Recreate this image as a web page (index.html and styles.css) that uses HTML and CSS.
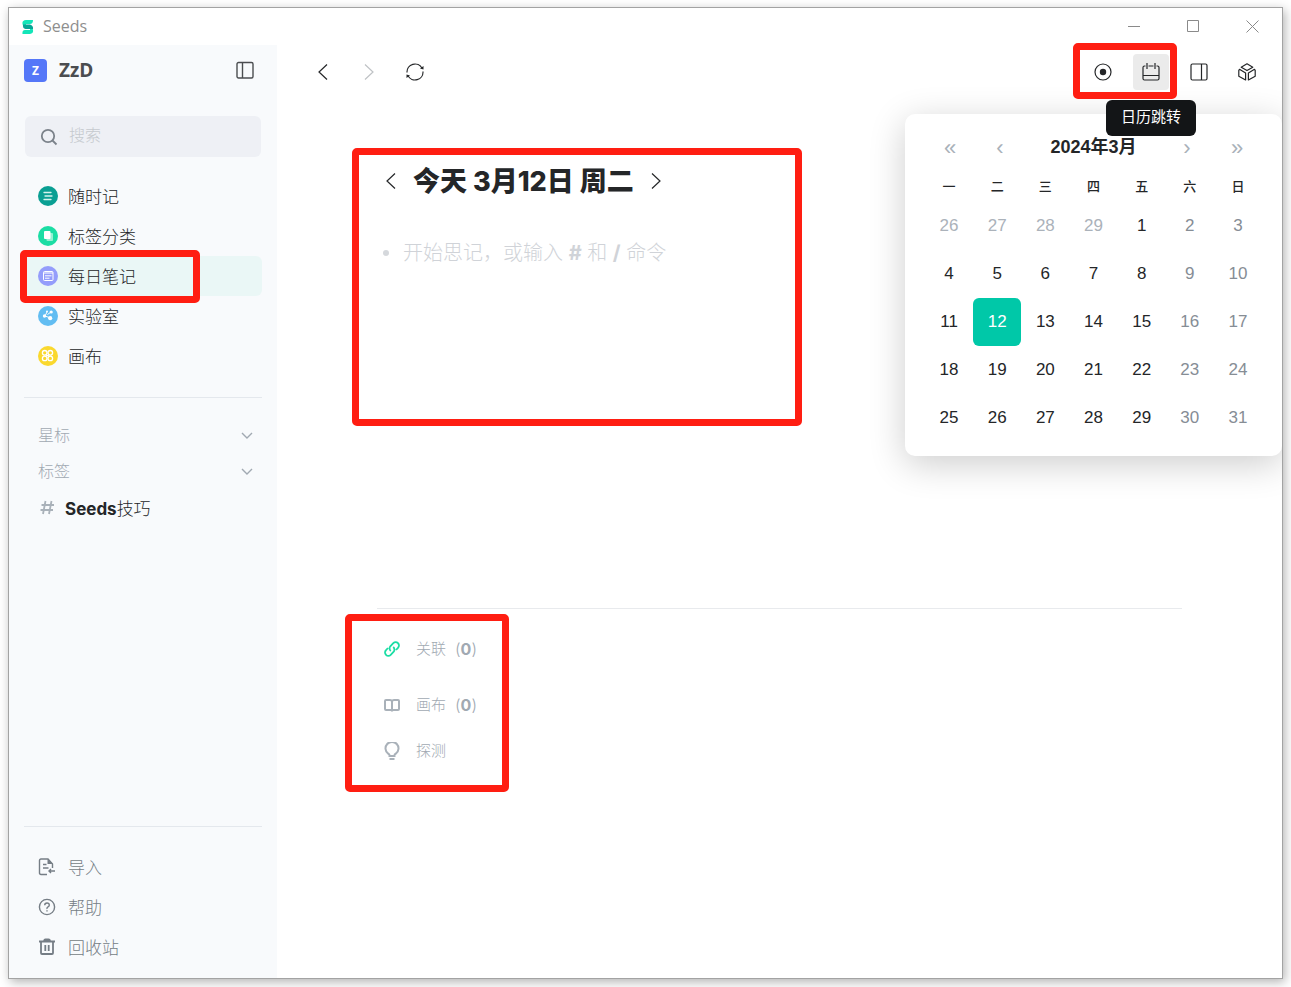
FILE: index.html
```html
<!DOCTYPE html>
<html lang="zh-CN">
  <head>
    <meta charset="UTF-8" />
    <meta name="viewport" content="width=device-width, initial-scale=1.0" />
    <title>Seeds</title>
    <!-- Stylesheet -->
    <link rel="stylesheet" href="styles.css">
  </head>
  <body>
    <div class="window">
      <header class="titlebar">
        <svg class="logo" width="12" height="14" viewBox="0 0 12 14">
          <path d="M4 0H11Q11 4 8 4H4V6L1 5.500Q-1 0.500 4 0Z" fill="#13e5b8" />
          <path d="M8 14H0.500Q0 10 3 10H8V8L10.500 8.500Q12.500 13 8 14Z" fill="#13e5b8" />
          <path d="M1 4.500H8Q11.500 5.500 11 9H3.500Q0.500 8.500 1 4.500Z" fill="#07a595" />
        </svg>
        <span class="app-name">Seeds</span>
        <div class="window-controls">
          <button aria-label="最小化">
            <svg width="13" height="13" viewBox="0 0 13 13"><path d="M0 6.500H12" /></svg>
          </button>
          <button aria-label="最大化">
            <svg width="13" height="13" viewBox="0 0 13 13"><path d="M.5.5H11.500V11.500H.5Z" /></svg>
          </button>
          <button aria-label="关闭">
            <svg width="13" height="13" viewBox="0 0 13 13"><path d="M.5.5L12.500 12.500M12.500.5L.5 12.500" /></svg>
          </button>
        </div>
      </header>

      <!-- Sidebar -->
      <aside class="sidebar">
        <div class="account">
          <span class="avatar">Z</span>
          <span class="user-name">ZzD</span>
          <button class="collapse" aria-label="收起侧栏">
            <svg class="line" width="18" height="18" viewBox="0 0 18 18">
              <rect x="1" y="1.500" width="16" height="15.500" rx="1.500" />
              <path d="M6.500 1.500V17" />
            </svg>
          </button>
        </div>
        <label class="search">
          <svg class="line" width="18" height="18" viewBox="0 0 18 18">
            <circle cx="8" cy="8" r="6.200" />
            <path d="M12.500 12.500L16.500 16.500" />
          </svg>
          <input type="text" placeholder="搜索" aria-label="搜索" />
        </label>
        <nav class="menu">
          <a href="#">
            <svg width="20" height="20" viewBox="0 0 20 20">
              <circle cx="10" cy="10" r="10" fill="#0a9f93" />
              <path d="M6 6.500H13M7 10H14M6 13.500H13" stroke="#d5f3ee" stroke-width="1.300" stroke-linecap="round" />
            </svg>
            随时记
          </a>
          <a href="#">
            <svg width="20" height="20" viewBox="0 0 20 20">
              <circle cx="10" cy="10" r="10" fill="#1bdda4" />
              <rect x="8.500" y="7" width="6.500" height="8" rx="1" fill="#96f0d3" />
              <rect x="6" y="5" width="6.500" height="8" rx="1" fill="#fff" />
            </svg>
            标签分类
          </a>
          <a href="#" class="active">
            <svg width="20" height="20" viewBox="0 0 20 20" fill="none">
              <circle cx="10" cy="10" r="10" fill="#949dfb" />
              <rect x="5.500" y="5.500" width="9.500" height="9" rx="1" stroke="#fff" />
              <path d="M5.500 7H15" stroke="#fff" />
              <path d="M7 9.800H13.500M7 12.200H11.500" stroke="#fff" />
            </svg>
            每日笔记
            <span class="mark mark-menu" aria-hidden="true"></span>
          </a>
          <a href="#">
            <svg width="20" height="20" viewBox="0 0 20 20">
              <circle cx="10" cy="10" r="10" fill="#62bdf2" />
              <path d="M7 10L9 6M7 10L12.500 12M9.500 8.500L13 6" stroke="#fff" />
              <circle cx="6.500" cy="10" r="1.700" fill="#fff" />
              <circle cx="12.200" cy="12.200" r="2.100" fill="#fff" />
              <circle cx="13.200" cy="6" r="1.600" fill="#fff" />
              <circle cx="9" cy="5.500" r="1" fill="#fff" />
            </svg>
            实验室
          </a>
          <a href="#">
            <svg width="20" height="20" viewBox="0 0 20 20" fill="none">
              <circle cx="10" cy="10" r="10" fill="#fad82e" />
              <g stroke="#fff" stroke-width="1.300">
                <circle cx="6.700" cy="6.800" r="2.300" />
                <circle cx="12.300" cy="6.800" r="2.300" />
                <circle cx="6.700" cy="12.400" r="2.300" />
                <circle cx="12.300" cy="12.400" r="2.300" />
                <path d="M8 9.600H11" />
              </g>
            </svg>
            画布
          </a>
        </nav>
        <div class="groups">
          <button class="group">
            星标
            <svg class="line" width="12" height="8" viewBox="0 0 12 8"><path d="M1 1L6 6L11 1" /></svg>
          </button>
          <button class="group">
            标签
            <svg class="line" width="12" height="8" viewBox="0 0 12 8"><path d="M1 1L6 6L11 1" /></svg>
          </button>
          <a href="#" class="tag">
            <svg class="line" width="15" height="15" viewBox="0 0 15 15">
              <path d="M5.500 1L3 14M11.500 1L9 14M1.500 5H14M.5 10H13" />
            </svg>
            <span><b>Seeds</b>技巧</span>
          </a>
        </div>
        <nav class="tools">
          <a href="#">
            <svg class="line" width="18" height="18" viewBox="0 0 18 18">
              <path d="M9 16.500H3Q1.500 16.500 1.500 15V2.500Q1.500 1 3 1H10L14.500 6V10M5 6.500H8.500M5 10H10.500M17 13H11M13 11L11 13L13 15" />
              <path d="M9.500 1L14.800 6H9.500Z" fill="currentColor" stroke="none" />
            </svg>
            导入
          </a>
          <a href="#">
            <svg class="line" width="18" height="18" viewBox="0 0 18 18">
              <circle cx="9" cy="9" r="7.600" />
              <path d="M6.700 7.200Q6.800 5 9 5T11.300 7Q11.300 8.200 10 8.900T9 11M9 12.300V13.600" />
            </svg>
            帮助
          </a>
          <a href="#">
            <svg class="line bin" width="18" height="18" viewBox="0 0 18 18">
              <path d="M1 3.500H17M3 4V15Q3 16 4 16H14Q15 16 15 15V4M6 3.500Q6 1.500 7.500 1.500H10.500Q12 1.500 12 3.500M7.300 7V13M10.700 7V13" />
            </svg>
            回收站
          </a>
        </nav>
      </aside>

      <!-- Main -->
      <main class="main">
        <div class="toolbar">
          <div class="history">
            <button aria-label="后退">
              <svg class="line" width="18" height="18" viewBox="0 0 18 18"><path d="M13 1.500L5 9L13 16.500" /></svg>
            </button>
            <button aria-label="前进" class="off">
              <svg class="line" width="18" height="18" viewBox="0 0 18 18"><path d="M5 1.500L13 9L5 16.500" /></svg>
            </button>
            <button aria-label="刷新">
              <svg class="line" width="18" height="18" viewBox="0 0 18 18">
                <path d="M1 9.500A8 8 0 0 1 16 5.200M17 8.500A8 8 0 0 1 2 12.800" />
                <path d="M17.500 3V6.500L14 5.500ZM.5 15V11.500L4 12.500Z" fill="currentColor" stroke="none" />
              </svg>
            </button>
          </div>
          <div class="actions">
            <div class="pair">
              <button aria-label="今天">
                <svg class="line" width="18" height="18" viewBox="0 0 18 18">
                  <circle cx="9" cy="9" r="8" />
                  <circle cx="9" cy="9" r="3.200" fill="currentColor" stroke="none" />
                </svg>
              </button>
              <button aria-label="日历跳转" class="pressed">
                <svg class="line" width="18" height="18" viewBox="0 0 18 18">
                  <path d="M3.500 3H2.500Q1 3 1 4.500V15.500Q1 17 2.500 17H15.500Q17 17 17 15.500V4.500Q17 3 15.500 3H14.500M5 0V6M13 0V6M6.500 3H11.500M1 12.500H17" />
                </svg>
                <span class="tooltip" role="tooltip">日历跳转</span>
              </button>
              <span class="mark mark-toolbar" aria-hidden="true"></span>
            </div>
            <button aria-label="右侧栏">
              <svg class="line" width="18" height="18" viewBox="0 0 18 18">
                <rect x="1" y="1" width="16" height="16" rx="1.500" />
                <path d="M11.500 1V17" />
              </svg>
            </button>
            <button aria-label="扩展">
              <svg class="line" width="18" height="18" viewBox="0 0 18 18" stroke-linejoin="round">
                <path d="M9 .8L14.800 4.200L9 7.600L3.200 4.200Z" />
                <path d="M1.500 6.300L7.600 10V17L.8 13.200V7.300Z" />
                <path d="M16.500 6.300L10.400 10V17L17.200 13.200V7.300Z" />
              </svg>
            </button>
          </div>
        </div>

        <section class="daily">
          <div class="day-title">
            <button aria-label="前一天">
              <svg class="line" width="18" height="18" viewBox="0 0 18 18"><path d="M13 1.500L5 9L13 16.500" /></svg>
            </button>
            <h1>今天 3月12日 周二</h1>
            <button aria-label="后一天">
              <svg class="line" width="18" height="18" viewBox="0 0 18 18"><path d="M5 1.500L13 9L5 16.500" /></svg>
            </button>
          </div>
          <ul class="notes">
            <li>开始思记，或输入 <b>#</b> 和 <b>/</b> 命令</li>
          </ul>
          <span class="mark mark-daily" aria-hidden="true"></span>
        </section>

        <section class="related">
          <button class="first">
            <svg class="line link" width="18" height="18" viewBox="0 0 18 18">
              <path d="M7.800 11A3.300 3.300 0 0 1 7.300 6.300L10.300 3.200A3.300 3.300 0 0 1 15 7.900L13 10M10.200 7A3.300 3.300 0 0 1 10.700 11.700L7.700 14.800A3.300 3.300 0 0 1 3 10.100L5 8" />
            </svg>
            <span>关联</span><span>(<b>0</b>)</span>
          </button>
          <button>
            <svg class="line book" width="18" height="18" viewBox="0 0 18 18">
              <path d="M9 5Q8.500 4 7 4H3Q2 4 2 5V13Q2 14 3 14H7.500Q8.500 14 9 14.500Q9.500 14 10.500 14H15Q16 14 16 13V5Q16 4 15 4H11Q9.500 4 9 5V14" />
            </svg>
            <span>画布</span><span>(<b>0</b>)</span>
          </button>
          <button>
            <svg class="line bulb" width="18" height="18" viewBox="0 0 18 18">
              <path d="M6.500 14V13Q6.500 12.300 5 11.500A6.500 6.500 0 1 1 13 11.500Q11.500 12.300 11.500 13V14ZM6.500 17H11.500" />
            </svg>
            <span>探测</span>
          </button>
          <span class="mark mark-related" aria-hidden="true"></span>
        </section>

        <!-- Calendar popup -->
        <div class="calendar">
          <div class="calendar-head">
            <button aria-label="上一年">«</button>
            <button aria-label="上个月">‹</button>
            <strong>2024年3月</strong>
            <button aria-label="下个月">›</button>
            <button aria-label="下一年">»</button>
          </div>
          <table>
            <thead>
              <tr><th>一</th><th>二</th><th>三</th><th>四</th><th>五</th><th>六</th><th>日</th></tr>
            </thead>
            <tbody>
              <tr>
                <td class="other"><button>26</button></td>
                <td class="other"><button>27</button></td>
                <td class="other"><button>28</button></td>
                <td class="other"><button>29</button></td>
                <td><button>1</button></td>
                <td><button>2</button></td>
                <td><button>3</button></td>
              </tr>
              <tr>
                <td><button>4</button></td>
                <td><button>5</button></td>
                <td><button>6</button></td>
                <td><button>7</button></td>
                <td><button>8</button></td>
                <td><button>9</button></td>
                <td><button>10</button></td>
              </tr>
              <tr>
                <td><button>11</button></td>
                <td class="selected"><button>12</button></td>
                <td><button>13</button></td>
                <td><button>14</button></td>
                <td><button>15</button></td>
                <td><button>16</button></td>
                <td><button>17</button></td>
              </tr>
              <tr>
                <td><button>18</button></td>
                <td><button>19</button></td>
                <td><button>20</button></td>
                <td><button>21</button></td>
                <td><button>22</button></td>
                <td><button>23</button></td>
                <td><button>24</button></td>
              </tr>
              <tr>
                <td><button>25</button></td>
                <td><button>26</button></td>
                <td><button>27</button></td>
                <td><button>28</button></td>
                <td><button>29</button></td>
                <td><button>30</button></td>
                <td><button>31</button></td>
              </tr>
            </tbody>
          </table>
        </div>
      </main>
    </div>
  </body>
</html>
```
FILE: styles.css
```css
* {
  padding: 0;
  margin: 0;
  box-sizing: border-box;
}
body {
  min-height: 100vh;
  padding: 7px 8px 8px;
  display: flex;
  background-color: #ffffff;
  font-family: Inter, "Noto Sans CJK SC", sans-serif;
  font-size: 17px;
  font-weight: 300;
  color: #242628;
}
button {
  background: none;
  border: none;
  font: inherit;
  color: inherit;
  cursor: pointer;
}
a {
  color: inherit;
  text-decoration: none;
}
b {
  font-weight: 700;
}
.line {
  fill: none;
  stroke: currentColor;
  stroke-width: 1.4;
  flex: none;
}
.window {
  flex: 1;
  display: grid;
  grid-template-columns: 268px 1fr;
  grid-template-rows: 37px 1fr;
  border: 1px solid #a3a3a3;
  background-color: #ffffff;
  box-shadow: 2px 3px 10px rgba(0, 0, 0, 0.3);
  overflow: hidden;
}

/* Title bar */
.titlebar {
  grid-column: 1 / 3;
  display: flex;
  align-items: center;
  padding-left: 13px;
}
.app-name {
  margin-left: 9px;
  font-family: "Open Sans", sans-serif;
  font-size: 16px;
  font-weight: 400;
  line-height: 20px;
  padding-bottom: 2px;
  color: #8e8e8e;
}
.window-controls {
  margin-left: auto;
  display: flex;
}
.window-controls button {
  width: 59px;
  height: 36px;
  display: grid;
  place-items: center;
}
.window-controls svg {
  fill: none;
  stroke: #8a8a8a;
}

/* Sidebar */
.sidebar {
  display: flex;
  flex-direction: column;
  padding: 0 15px 11px;
  background-color: #f8fafc;
}
.account {
  height: 50px;
  display: flex;
  align-items: center;
}
.avatar {
  width: 23px;
  height: 23px;
  border-radius: 4px;
  background-color: #5577f8;
  color: #ffffff;
  font-family: "Open Sans", sans-serif;
  font-size: 12px;
  font-weight: 700;
  line-height: 23px;
  text-align: center;
}
.user-name {
  margin-left: 12px;
  font-family: "Open Sans", sans-serif;
  font-size: 19px;
  font-weight: 700;
  color: #4b4d50;
}
.collapse {
  margin-left: auto;
  margin-right: 8px;
  height: 18px;
  color: #4b4d50;
}
.search {
  height: 41px;
  margin: 21px 1px 0;
  padding-left: 15px;
  display: flex;
  align-items: center;
  gap: 11px;
  border-radius: 6px;
  background-color: #eef0f5;
  color: #7b828a;
}
.search .line {
  stroke-width: 1.8;
}
.search input {
  flex: 1;
  min-width: 0;
  padding-bottom: 3px;
  border: none;
  outline: none;
  background: none;
  font: inherit;
  font-size: 16px;
}
.search input::placeholder {
  color: #c5c9ce;
}
.menu {
  margin-top: 19px;
}
.menu a,
.tools a {
  position: relative;
  height: 40px;
  padding: 0 0 2px 14px;
  display: flex;
  align-items: center;
  gap: 10px;
  border-radius: 6px;
}
.menu svg,
.tools svg {
  margin-top: 2px;
}
.menu .active {
  background-color: #eaf7f6;
}
.groups {
  margin-top: 21px;
  padding-top: 19px;
  border-top: 1px solid #e4e8ed;
}
.group {
  width: 100%;
  height: 36px;
  padding: 0 9px 2px 14px;
  display: flex;
  align-items: center;
  justify-content: space-between;
  font-size: 16px;
  color: #a1a9b2;
}
.group svg {
  margin-top: 3px;
}
.tag {
  height: 38px;
  padding: 0 0 2px 16px;
  display: flex;
  align-items: center;
  gap: 10px;
}
.tag svg {
  color: #a9b1b9;
  stroke-width: 1.8;
}
.tools {
  margin-top: auto;
  padding-top: 20px;
  border-top: 1px solid #e4e8ed;
  color: #757d85;
}
.tools a {
  gap: 12px;
}
.tools .bin {
  stroke-width: 1.8;
}

/* Main */
.main {
  position: relative;
}
.toolbar {
  height: 54px;
  padding: 0 17px 0 28px;
  display: flex;
  align-items: center;
  justify-content: space-between;
}
.history,
.actions,
.pair {
  display: flex;
  gap: 10px;
}
.actions,
.pair {
  position: relative;
  gap: 12px;
}
.actions {
  z-index: 2;
}
.toolbar .line {
  stroke-width: 1.2;
}
.toolbar button {
  position: relative;
  width: 36px;
  height: 36px;
  display: grid;
  place-items: center;
  border-radius: 4px;
}
.toolbar .off {
  color: #bfc2c5;
}
.toolbar .pressed {
  background-color: #ebebeb;
}
.tooltip {
  position: absolute;
  top: 46px;
  left: -27px;
  height: 36px;
  padding: 0 15px;
  border-radius: 6px;
  background-color: #131517;
  color: #ffffff;
  font-size: 15px;
  font-weight: 400;
  line-height: 34px;
  white-space: nowrap;
}
.daily,
.related {
  position: relative;
  margin: 0 100px;
}
.daily {
  min-height: 453px;
  margin-top: 56px;
}
.day-title {
  height: 52px;
  display: flex;
  align-items: center;
  gap: 8px;
}
.day-title button {
  width: 28px;
  height: 28px;
  display: grid;
  place-items: center;
}
.day-title .line {
  stroke-width: 1.2;
}
.day-title h1 {
  padding-bottom: 4px;
  font-size: 27px;
  font-weight: 800;
}
.notes {
  margin-top: 30px;
  list-style: none;
  font-size: 20px;
  line-height: 32px;
  color: #d0d3d8;
}
.notes li::before {
  content: "";
  display: inline-block;
  width: 6px;
  height: 6px;
  margin: 0 14px 4px 6px;
  border-radius: 50%;
  background-color: #d5d8dc;
}
.related {
  padding-top: 17px;
  border-top: 1px solid #e8eaed;
}
.related button {
  height: 46px;
  padding-left: 6px;
  display: flex;
  align-items: center;
  font-size: 15px;
  color: #a1a9b2;
}
.related .first {
  margin-bottom: 10px;
}
.related svg {
  margin-right: 15px;
}
.related span {
  padding-bottom: 3px;
}
.related span + span {
  margin-left: 9px;
  padding-bottom: 1px;
  font-size: 16px;
}
.related .link {
  color: #1bdda4;
  stroke-width: 1.8;
}
.related .book,
.related .bulb {
  color: #a9b1b9;
  stroke-width: 2;
}

/* Calendar */
.calendar {
  position: absolute;
  top: 69px;
  right: 0;
  width: 377px;
  padding: 16px 20px 14px;
  border-radius: 10px;
  background-color: #ffffff;
  box-shadow: 0 8px 36px rgba(0, 0, 0, 0.2);
  font-family: "Liberation Sans", "Noto Sans CJK SC", sans-serif;
  font-weight: 400;
}
.calendar-head {
  height: 32px;
  margin-bottom: 8px;
  display: flex;
  align-items: center;
}
.calendar-head strong {
  flex: 1;
  padding-bottom: 2px;
  font-size: 18px;
  text-align: center;
}
.calendar-head button {
  width: 50px;
  padding-top: 4px;
  font-size: 22px;
  color: #a9b1b9;
}
table {
  width: 100%;
  border-collapse: collapse;
  table-layout: fixed;
}
th {
  height: 32px;
  padding-bottom: 2px;
  font-size: 13px;
  font-weight: 500;
}
td {
  height: 48px;
}
td button {
  width: 100%;
  height: 48px;
  display: block;
  border-radius: 6px;
}
td:nth-child(n + 6) {
  color: #868d95;
}
td.other {
  color: #abb2ba;
}
.selected button {
  background-color: #00c8a8;
  color: #ffffff;
}

/* Red highlight frames */
.mark {
  position: absolute;
  border: 7px solid #ff1e12;
  border-radius: 5px;
  pointer-events: none;
}
.mark-menu {
  top: -6px;
  left: -4px;
  width: 180px;
  height: 53px;
}
.mark-toolbar {
  top: -11px;
  left: -12px;
  width: 104px;
  height: 56px;
}
.mark-daily {
  top: -7px;
  left: -25px;
  width: 450px;
  height: 278px;
}
.mark-related {
  top: 5px;
  left: -32px;
  width: 164px;
  height: 178px;
}
```
